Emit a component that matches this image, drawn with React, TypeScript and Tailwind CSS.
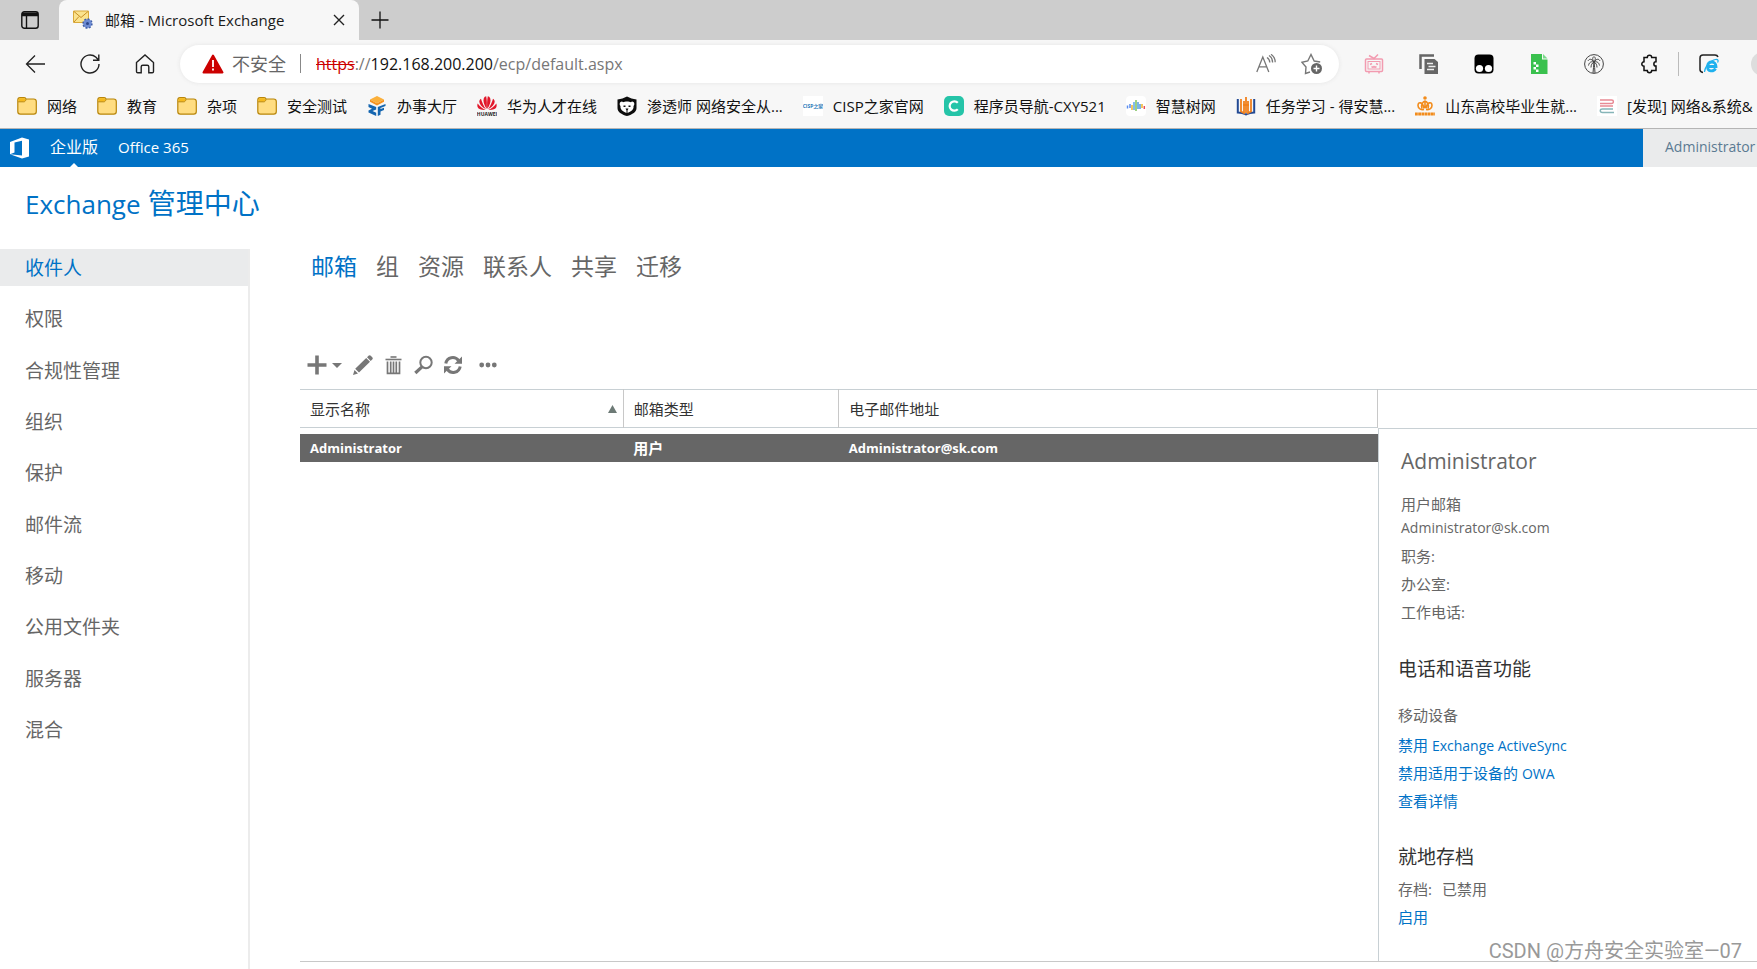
import type { ReactNode } from "react";

const FONT = "font-['Open_Sans','Noto_Sans_CJK_SC',sans-serif]";

function FolderIcon() {
	return (
		<svg viewBox="0 0 20 20" className="size-5">
			<path
				d="M.8 4.2C.8 2.6 1.6 1.6 3 1.6h4.2c1 0 1.6.5 1.8 1.4h7.6c1.6 0 2.7 1 2.7 2.6v10c0 1.6-1 2.6-2.6 2.6H3.4C1.8 18.2.8 17.2.8 15.6Z"
				fill="#ffdd82"
				stroke="#b8860b"
				strokeWidth="1.2"
			/>
			<path d="M1.4 5.4c0-2 .6-3.200 2-3.200h3.400c1 0 1.5.5 1.5 1.5S7.800 5.400 6.800 5.400Z" fill="#f5b91c" />
			<path d="M1.200 5.800h5.600c1.200 0 2-1 2.200-2.600" fill="none" stroke="#b8860b" />
		</svg>
	);
}

function HallIcon() {
	return (
		<svg viewBox="0 0 20 20" className="size-5">
			<path d="M10 0l7 3.600-7 3.600-7-3.600Z" fill="#fbb03b" />
			<path d="M3 3.600l7 3.600v2.200L3 5.800ZM17 3.600l-7 3.600v2.200l7-3.600Z" fill="#f7931e" />
			<path d="M1.500 8l7.700 3v2.500L5.500 15l3.700 1.700V20L1.500 16.500v-2L5 12.800 1.500 11ZM18.500 8l-7.700 3v9l2.700-1.200v-3.300l3.500-1.500v-2.300l-3.500 1.300v-1l5-2Z" fill="#1566b0" />
		</svg>
	);
}

function HuaweiIcon() {
	return (
		<svg viewBox="0 0 20 20" className="size-5" fill="#e2182b">
			<path d="M9.700 13C7 9 5.800 5 6.800 2.300 7.300 1 8.300.4 9.200.3c.700 3.500.9 8 .5 12.700ZM10.300 13C13 9 14.200 5 13.200 2.300 12.700 1 11.700.4 10.800.3c-.7 3.500-.9 8-.5 12.700Z" />
			<path d="M9 13.300C4.500 11 2.400 8 2.300 5.700 2.300 4.200 3 3.300 4 2.700 5 6.500 6.800 10.200 9 13.300ZM11 13.300c4.500-2.300 6.600-5.300 6.700-7.600 0-1.500-.7-2.400-1.700-3C15 6.500 13.200 10.200 11 13.300Z" />
			<path d="M8.500 14C4.500 14.200 1.500 13 .7 11.200.1 10 .3 8.400.7 7.400 2.700 10 5.500 12.400 8.500 14ZM11.500 14c4 .2 7-1 7.800-2.800.6-1.200.4-2.800 0-3.800-2 2.600-4.800 5-7.800 6.600Z" />
			<text x="10" y="20" fontSize="5" fontWeight="700" textAnchor="middle" fill="#222">HUAWEI</text>
		</svg>
	);
}

function BearIcon() {
	return (
		<svg viewBox="0 0 20 20" className="size-5">
			<path d="M.5 3.500C4 3.200 7 2 10 .5c3 1.500 6 2.700 9.500 3V12c0 4-4 6.500-9.500 8-5.500-1.500-9.500-4-9.500-8Z" fill="#0d0d0d" />
			<path d="M3 6.500c1.500-1.300 2.500-1 3-.3 2-1 6-1 8 0 .5-.7 1.500-1 3 .3.8 2 0 3-.5 3.500.5 3.500-2 5.500-6.500 7-4.500-1.500-7-3.500-6.500-7-.5-.5-1.300-1.500-.5-3.500Z" fill="#fff" />
			<path d="M6.500 9.500h2V11h-2ZM11.500 9.500h2V11h-2ZM8.500 12.500h3l-1 2V17h-1v-2.500Z" fill="#111" />
		</svg>
	);
}

function CispIcon() {
	return (
		<svg viewBox="0 0 20 20" className="size-5">
			<path d="M0 0h20v20H0Z" fill="#fff" />
			<text x="10" y="12" fontSize="5" fontWeight="700" textAnchor="middle" fill="#2a7ab8">CISP之家</text>
		</svg>
	);
}

function NavIcon() {
	return (
		<svg viewBox="0 0 20 20" className="size-5">
			<rect width="20" height="20" rx="5" fill="#25c4a8" />
			<path d="M13.800 6.800A4.700 4.700 0 1 0 13.800 13.200" fill="none" stroke="#fff" strokeWidth="2.200" />
		</svg>
	);
}

function TreeIcon() {
	return (
		<svg viewBox="0 0 20 20" className="size-5" fill="none" strokeWidth="1.500">
			<rect width="20" height="20" rx="4" fill="#fff" />
			<path d="M1.500 9.500v3M4 8v4" stroke="#5b8def" />
			<path d="M6 9v5" stroke="#f0b429" />
			<path d="M8 6v8" stroke="#59a7e8" />
			<path d="M10 4v11" stroke="#7bc15a" />
			<path d="M12 6v7M14 8v5" stroke="#4f9de0" />
			<path d="M16 8v4" stroke="#f0b429" />
			<path d="M18.300 10v3" stroke="#e8505b" />
		</svg>
	);
}

function StudyIcon() {
	return (
		<svg viewBox="0 0 20 20" className="size-5" fill="none">
			<path d="M1.800 3v13.500c3 0 5.500.5 8.200 2 2.700-1.500 5.200-2 8.200-2V3" stroke="#234a94" strokeWidth="2" />
			<path d="M5 3v12.500L8 17V5M15 3v12.500L12 17V5M10 1v16M7 9h6" stroke="#f0811e" strokeWidth="1.800" />
		</svg>
	);
}

function ShandongIcon() {
	return (
		<svg viewBox="0 0 20 20" className="size-5" fill="none" stroke="#f28c1c">
			<circle cx="10" cy="2" r="1.800" fill="#f28c1c" stroke="none" />
			<path d="M10 5v7M9 12.500C8 6 3 5 3 9.500c0 3 3 4.500 6 4M11 12.500c1-6.500 6-7.500 6-3 0 3-3 4.500-6 4M7 12.500C5.500 9 8 5.500 10 5c2 .5 4.500 4 3 7.500" strokeWidth="1.600" />
			<path d="M0 18h20" strokeWidth="3.200" strokeDasharray="2.800 .4" />
		</svg>
	);
}

function FindIcon() {
	return (
		<svg viewBox="0 0 20 20" className="size-5" fill="none" strokeWidth="1.400">
			<path d="M0 0h20v20H0Z" fill="#fff" />
			<path d="M3 4h11.500c2.500 0 2.500 3.500 0 3.500H3M3 10h13" stroke="#e88a94" />
			<path d="M16 13H5.500c-3 0-3 3.500 0 3.500H17" stroke="#86b5b8" />
		</svg>
	);
}

const bookmarks: { label: string; icon: ReactNode }[] = [
	{ label: "网络", icon: <FolderIcon /> },
	{ label: "教育", icon: <FolderIcon /> },
	{ label: "杂项", icon: <FolderIcon /> },
	{ label: "安全测试", icon: <FolderIcon /> },
	{ label: "办事大厅", icon: <HallIcon /> },
	{ label: "华为人才在线", icon: <HuaweiIcon /> },
	{ label: "渗透师 网络安全从...", icon: <BearIcon /> },
	{ label: "CISP之家官网", icon: <CispIcon /> },
	{ label: "程序员导航-CXY521", icon: <NavIcon /> },
	{ label: "智慧树网", icon: <TreeIcon /> },
	{ label: "任务学习 - 得安慧...", icon: <StudyIcon /> },
	{ label: "山东高校毕业生就...", icon: <ShandongIcon /> },
	{ label: "[发现] 网络&系统&", icon: <FindIcon /> },
];

const sections = ["收件人", "权限", "合规性管理", "组织", "保护", "邮件流", "移动", "公用文件夹", "服务器", "混合"];
const tabs = ["邮箱", "组", "资源", "联系人", "共享", "迁移"];

function TabStrip() {
	return (
		<div className="flex h-10 bg-[#cdcdcd]">
			<button aria-label="标签操作" className="flex w-[59px] items-center justify-center">
				<svg viewBox="0 0 18 18" className="size-[18px]" fill="none" stroke="#111" strokeWidth="1.400">
					<rect x=".8" y=".8" width="16.400" height="16.400" rx="2.500" />
					<path d="M1 2.800h16M1 4h16" strokeWidth="2.400" />
					<path d="M5.500 5v12" />
				</svg>
			</button>
			<div className="flex w-[300px] items-center rounded-t-lg bg-[#f7f7f7] px-3.5">
				<svg viewBox="0 0 20 20" className="size-5">
					<path d="M.5 1h15v11.500H.5Z" fill="#fbe38e" stroke="#d9a93a" />
					<path d="M1 1.500l7 6 7-6M1 12l5-5.500" fill="none" stroke="#c98f25" />
					<circle cx="14.500" cy="13.500" r="4.300" fill="#7f9bdc" stroke="#3f5ea8" strokeWidth="1.800" strokeDasharray="2 1.300" />
					<circle cx="14.500" cy="13.500" r="3.700" fill="#6c8ad2" />
					<circle cx="14.500" cy="13.500" r="1.500" fill="#2c4789" />
				</svg>
				<span className="ml-3 flex-1 text-[15px] whitespace-nowrap text-[#1b1b1b]">邮箱 - Microsoft Exchange</span>
				<button aria-label="关闭">
					<svg viewBox="0 0 12 12" className="size-3" stroke="#222" strokeWidth="1.400">
						<path d="M1 1l10 10M11 1L1 11" />
					</svg>
				</button>
			</div>
			<button aria-label="新建标签页" className="ml-3">
				<svg viewBox="0 0 18 18" className="size-[18px]" stroke="#111" strokeWidth="1.300">
					<path d="M9 .5v17M.5 9h17" />
				</svg>
			</button>
		</div>
	);
}

function AddressBar() {
	return (
		<div className="flex h-[47px] items-center overflow-hidden">
			<div className="flex w-[180px] shrink-0 items-center gap-[35px] pl-[25px]">
				<button aria-label="后退">
					<svg viewBox="0 0 20 20" className="size-5" fill="none" stroke="#222" strokeWidth="1.300">
						<path d="M20 10H1.500M10 1.500L1.500 10l8.500 8.500" />
					</svg>
				</button>
				<button aria-label="刷新">
					<svg viewBox="0 0 20 20" className="size-5" fill="none" stroke="#222" strokeWidth="1.400">
						<path d="M19 10a9 9 0 1 1-3-6.700L18.500 6M18.800 .5V6.200H13" />
					</svg>
				</button>
				<button aria-label="主页">
					<svg viewBox="0 0 20 20" className="size-5" fill="none" stroke="#222" strokeWidth="1.400">
						<path d="M1.500 8.500L10 1l8.500 7.500v9a1.300 1.300 0 0 1-1.300 1.300h-3.400v-6c0-1-.6-1.600-1.600-1.600H7.800c-1 0-1.600.6-1.600 1.600v6H2.800a1.300 1.300 0 0 1-1.300-1.300Z" />
					</svg>
				</button>
			</div>
			<div className="flex h-[38px] flex-1 items-center rounded-full bg-white pr-4 pl-[22px] shadow-[0_0_4px_#e4e4e4]">
				<svg viewBox="0 0 22 20" className="h-5 w-[22px]">
					<path d="M11 1.500L20.500 18.500H1.500Z" fill="#c00" stroke="#c00" strokeWidth="2" strokeLinejoin="round" />
					<path d="M11 6v7M11 14.500v2" stroke="#fff" strokeWidth="1.800" />
				</svg>
				<span className="ml-2 text-lg text-[#666]">不安全</span>
				<span className="mx-[14px] h-[19px] w-px bg-[#888]" />
				<span className="ml-px flex-1 text-base text-[#777]">
					<span className="text-[#c00] line-through">https</span>://<span className="text-[#111]">192.168.200.200</span>/ecp/default.aspx
				</span>
				<button aria-label="大声朗读">
					<svg viewBox="0 0 20 20" className="size-5" fill="none" stroke="#777" strokeWidth="1.300">
						<path d="M.8 18L6.800 3l6 15M3 12.800h7.600M11 3.500c2 1.300 2.800 3 2.800 5M13 1.500c2.500 1.500 3.600 4 3.600 7M15 .3c3 2 4.200 4.500 4.200 8" />
					</svg>
				</button>
				<button aria-label="收藏" className="ml-[25px]">
					<svg viewBox="0 0 22 22" className="size-[22px]" fill="none" stroke="#777" strokeWidth="1.400">
						<path d="M9 19l-4.500 1.500.5-6.500L.8 9.200l6-1.200L10 1.500 13.200 8l6 1" />
						<circle cx="15.500" cy="15.500" r="5.500" fill="#666" stroke="none" />
						<path d="M15.500 12.500v6M12.500 15.500h6" stroke="#fff" />
					</svg>
				</button>
			</div>
			<div className="flex w-[418px] shrink-0 items-center gap-[35px] overflow-hidden pl-[25px]">
				<svg viewBox="0 0 20 20" className="size-5 shrink-0" fill="none" stroke="#f29bb0" strokeWidth="1.500">
					<rect x="1.500" y="5" width="17" height="12.500" rx="1" />
					<rect x="4" y="7.500" width="12" height="7.500" strokeWidth="1" />
					<path d="M5 1.500L10 4.500l4-4M6 10.500l2-1M14 10.500l-2-1M7.500 12.500l1.500.8 1-.8 1 .8 1.500-.8M5 18v1.500M15 18v1.500" />
				</svg>
				<svg viewBox="0 0 20 20" className="size-5 shrink-0" fill="none">
					<path d="M1.500 15V1.500H15" stroke="#666" strokeWidth="2.500" />
					<path d="M5.500 5h10L19 8v12H5.500Z" fill="#666" />
					<path d="M8 9.500h6M9.500 12.500h7M8 15.500h7" stroke="#eee" strokeWidth="1.300" />
				</svg>
				<svg viewBox="0 0 20 20" className="size-5 shrink-0">
					<rect x=".5" y=".5" width="19" height="19" rx="4" fill="#000" />
					<circle cx="5.500" cy="14.500" r="3.600" fill="#fff" />
					<circle cx="14.500" cy="14.500" r="3.600" fill="#fff" />
				</svg>
				<svg viewBox="0 0 20 20" className="size-5 shrink-0">
					<path d="M2 0h11v5.500h5.500V20H2Z" fill="#3ac14e" />
					<path d="M14 0l4.500 4.500H14Z" fill="#7bd98a" />
					<path d="M4.500 8H7v2.500H4.500ZM7 10.500h2.500V13H7ZM4.500 13H7v2.500H4.500ZM7 15.500h2.500V18H7Z" fill="#fff" />
				</svg>
				<svg viewBox="0 0 20 20" className="size-5 shrink-0" fill="none" stroke="#444">
					<circle cx="10" cy="10" r="9.400" />
					<path d="M10 8c-.5 4-.5 7-1 11M10 8c.8 4 .5 7 1 11M10 8C7 4 5 5 4 7M10 8C6.500 7 5 9 4.500 11.500M10 8C8 9 7 11 7 13.500M10 8c3-4 5-3 6-1M10 8c3.500-1 5 1 5.500 3.500M10 8c2 1 3 3 3 5.500M10 8C8 5 8.500 3.500 10 2.500 11.500 3.500 12 5 10 8" />
				</svg>
				<svg viewBox="0 0 20 20" className="size-5 shrink-0" fill="none" stroke="#111" strokeWidth="1.500">
					<path d="M5 3.500h3.300a2.200 2.200 0 0 1 4.400 0H17v4.300a2 2 0 0 0 0 4.300v4.400h-4.300a2.200 2.200 0 0 1-4.400 0H5v-4.300a2.200 2.200 0 1 1 0-4.400Z" />
				</svg>
				<div className="flex shrink-0 items-center gap-5 border-l border-[#bbb] pl-5 -ml-4">
					<svg viewBox="0 0 20 20" className="size-5">
						<path d="M4 18.500c-2-.3-3-1.300-3-3V4c0-2 1-3 3-3h12c1.700 0 2.500.6 3 2" fill="none" stroke="#222" strokeWidth="1.500" />
						<path d="M8.500 12.500h8.500c0-6-8-6-8.500 0 0 5.500 6 5.500 8 2" fill="none" stroke="#1fb1ee" strokeWidth="2.800" />
						<path d="M5.500 18c0-5 6-12 11-12.500 3-.3 3 1.500 2 3" fill="none" stroke="#1fb1ee" strokeWidth="1.200" />
					</svg>
					<span className="ml-3 size-6 rounded-full bg-[#ddd]" />
				</div>
			</div>
		</div>
	);
}

function BookmarkBar() {
	return (
		<nav className="flex h-[41px] items-center gap-5 overflow-hidden pb-[3px] pl-[17px]">
			{bookmarks.map((b) => (
				<a key={b.label} href="#" className="flex shrink-0 items-center gap-2.5 text-[15px] whitespace-nowrap text-[#111]">
					{b.icon}
					{b.label}
				</a>
			))}
		</nav>
	);
}

function SuiteBar() {
	return (
		<header className="flex h-[38px] bg-[#0072c6] text-white">
			<svg viewBox="0 0 20 22" className="mt-2 ml-2.5 h-[22px] w-5" fill="#fff">
				<path d="M0 5L12 .5l7 2v17l-7 2L0 17.300l12 1.300V3.800L4.500 5.500v10L0 17.300Z" />
			</svg>
			<a href="#" className="ml-5 flex flex-col items-center justify-between pt-1.5 text-base">
				企业版
				<svg viewBox="0 0 8 4" className="h-1 w-2" fill="#fff">
					<path d="M4 0l4 4H0Z" />
				</svg>
			</a>
			<a href="#" className="ml-5 pt-[7px] text-[15px]">
				Office 365
			</a>
			<button className="ml-auto flex w-[114px] justify-start overflow-hidden bg-[#eaebec] pt-2 pl-[22px] text-sm text-[#5b7a92]">
				Administrator
			</button>
		</header>
	);
}

function Toolbar() {
	return (
		<div className="flex h-6 items-center pl-[7px] text-[#777]">
			<button aria-label="新建" className="flex items-center gap-[5px]">
				<svg viewBox="0 0 20 20" className="size-5" stroke="currentColor" strokeWidth="3.600">
					<path d="M10 .5v19M.5 10h19" />
				</svg>
				<svg viewBox="0 0 10 5" className="h-[5px] w-2.5" fill="currentColor">
					<path d="M0 0h10L5 5Z" />
				</svg>
			</button>
			<button aria-label="编辑" className="ml-[11px]">
				<svg viewBox="0 0 20 20" className="size-5" fill="currentColor">
					<path d="M15.500.8c.6-.8 1.600-.8 2.300 0l1.400 1.400c.8.7.8 1.700 0 2.300l-1.500 1.500L14 2.300ZM13.200 3L17 6.800 6 17.500l-3.800-3.800ZM1.500 15L5 18.500 0 20Z" />
				</svg>
			</button>
			<button aria-label="删除" className="ml-3">
				<svg viewBox="0 0 17 20" className="h-5 w-[17px]" fill="none" stroke="currentColor">
					<path d="M.5 4.500h16" strokeWidth="1.600" />
					<path d="M5.500 2h6" strokeWidth="1.600" />
					<path d="M2.500 6.500v11.800h12V6.500M5.700 6.500v11.500M8.500 6.500v11.500M11.300 6.500v11.500" strokeWidth="1.700" />
				</svg>
			</button>
			<button aria-label="搜索" className="ml-3">
				<svg viewBox="0 0 19 20" className="h-5 w-[19px]" fill="none" stroke="currentColor">
					<circle cx="12" cy="7.500" r="5.700" strokeWidth="2" />
					<path d="M8 11.800L1.300 18" strokeWidth="3.200" />
				</svg>
			</button>
			<button aria-label="刷新" className="ml-[11px]">
				<svg viewBox="0 0 18 20" className="h-5 w-[18px]" fill="none" stroke="currentColor" strokeWidth="3">
					<path d="M1.800 8.500C3 1.800 11 .8 14.500 5.500M16.200 11.500C15 18.200 7 19.200 3.500 14.500" />
					<path d="M18 1.500v7.300h-7.500ZM0 18.500v-7.300h7.500Z" fill="currentColor" stroke="none" />
				</svg>
			</button>
			<button aria-label="更多" className="ml-[17px]">
				<svg viewBox="0 0 18 6" className="h-1.5 w-[18px]" fill="currentColor">
					<circle cx="2.700" cy="3" r="2.400" />
					<circle cx="9" cy="3" r="2.400" />
					<circle cx="15.300" cy="3" r="2.400" />
				</svg>
			</button>
		</div>
	);
}

function MailboxTable() {
	return (
		<table className="w-full table-fixed border-collapse text-left text-[15px] leading-5">
			<thead>
				<tr className="h-[38px] border-y border-[#c8d0d4] text-[#333]">
					<th className="w-[30%] border-r border-[#c8c8c8] px-2.5 font-normal">
						<span className="flex items-center justify-between">
							显示名称
							<svg viewBox="0 0 9 8" className="-mr-1 h-2 w-[9px]" fill="#6d7a76">
								<path d="M4.500 0L9 8H0Z" />
							</svg>
						</span>
					</th>
					<th className="w-[20%] border-r border-[#c8c8c8] px-2.5 font-normal">邮箱类型</th>
					<th className="w-[50%] border-r border-[#c8c8c8] px-2.5 font-normal">电子邮件地址</th>
				</tr>
			</thead>
			<tbody>
				<tr className="h-1.5" />
				<tr className="h-7 bg-[#666] font-bold text-white">
					<td className="px-2.5 text-[13px]">Administrator</td>
					<td className="px-2.5">用户</td>
					<td className="px-2.5 text-[13px]">Administrator@sk.com</td>
				</tr>
			</tbody>
		</table>
	);
}

function DetailsPane() {
	return (
		<aside className="flex w-[379px] shrink-0 flex-col border-t border-[#c8d0d4] pt-[38px]">
			<div className="flex-1 border-t border-l border-[#c8d0d4] pt-4 pl-[19px] text-[15px] leading-7 whitespace-nowrap text-[#666]">
				<div className="pl-[3px]">
					<h2 className="text-[21px] leading-8">Administrator</h2>
					<div className="pt-[13px]">用户邮箱</div>
					<div className="text-sm leading-5">Administrator@sk.com</div>
					<div className="pt-1">职务:</div>
					<div>办公室:</div>
					<div>工作电话:</div>
				</div>
				<h3 className="pt-[15px] text-[19px] leading-[56px] text-[#333]">电话和语音功能</h3>
				<div className="pt-1">移动设备</div>
				<div className="flex flex-col items-start pt-0.5 text-[#0072c6]">
					<a href="#">
						禁用 <span className="text-sm">Exchange ActiveSync</span>
					</a>
					<a href="#">
						禁用适用于设备的 <span className="text-sm">OWA</span>
					</a>
					<a href="#">查看详情</a>
				</div>
				<h3 className="pt-7 text-[19px] text-[#333]">就地存档</h3>
				<div className="flex gap-2.5 pt-1">
					<span>存档:</span>
					<span>已禁用</span>
				</div>
				<a href="#" className="text-[#0072c6]">启用</a>
			</div>
		</aside>
	);
}

export default function App() {
	return (
		<div className={`relative flex min-h-screen flex-col overflow-hidden bg-white ${FONT}`}>
			<div className="border-b border-[#b5b5b5] bg-[#f7f7f7]">
				<TabStrip />
				<AddressBar />
				<BookmarkBar />
			</div>
			<SuiteBar />
			<h1 className="pt-4 pl-[25px] text-[28px] leading-10 text-[#0072c6]">
				<span className="text-[26px]">Exchange</span> 管理中心
			</h1>
			<div className="flex flex-1 pt-[25px]">
				<div className="w-[250px] shrink-0 border-r-2 border-[#ececec]">
					<nav className="flex h-[499px] flex-col justify-between text-[19px] leading-9 text-[#666]">
						{sections.map((s, i) => (
							<a key={s} href="#" className={i === 0 ? "bg-[#eaebec] pt-px pl-[25px] text-[#0072c6]" : "pt-px pl-[25px]"}>
								{s}
							</a>
						))}
					</nav>
				</div>
				<main className="flex min-w-0 flex-1 flex-col pl-[50px]">
					<nav className="flex gap-[19px] pl-[11px] text-[23px] leading-[34px] text-[#666]">
						{tabs.map((t, i) => (
							<a key={t} href="#" className={i === 0 ? "text-[#0072c6]" : ""}>
								{t}
							</a>
						))}
					</nav>
					<div className="pt-[70px] pb-3">
						<Toolbar />
					</div>
					<div className="mb-[7px] flex flex-1 border-b border-[#c8c8c8]">
						<div className="min-w-0 flex-1">
							<MailboxTable />
						</div>
						<DetailsPane />
					</div>
				</main>
			</div>
			<div className="absolute right-[15px] bottom-1 font-['Roboto','Noto_Sans_CJK_SC',sans-serif] text-xl text-[#999]">
				CSDN @方舟安全实验室—07
			</div>
		</div>
	);
}
